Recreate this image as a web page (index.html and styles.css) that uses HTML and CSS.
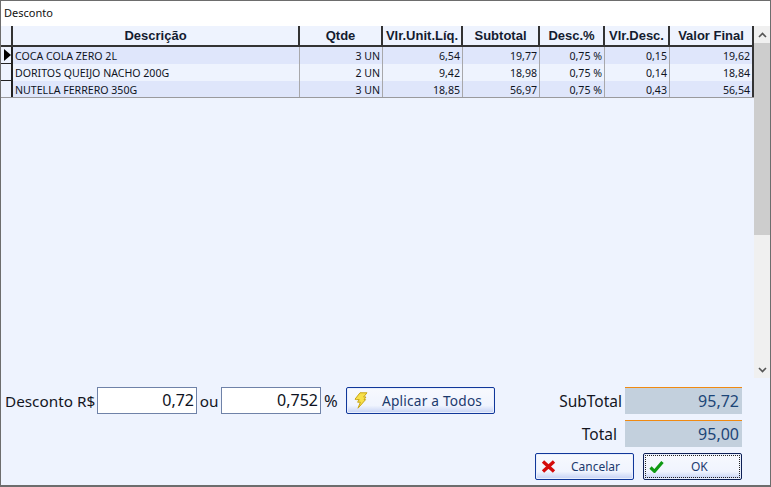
FILE: index.html
```html
<!DOCTYPE html>
<html lang="pt-BR">
<head>
<meta charset="utf-8">
<title>Desconto</title>
<link rel="stylesheet" href="styles.css">
</head>
<body>
<div class="window">
  <div class="titlebar">Desconto</div>
  <div class="content">
    <div class="grid-area">
      <div class="table-wrap">
        <div class="row head">
          <div class="c ind"></div>
          <div class="c center">Descrição</div>
          <div class="c center">Qtde</div>
          <div class="c center">Vlr.Unit.Líq.</div>
          <div class="c center">Subtotal</div>
          <div class="c center">Desc.%</div>
          <div class="c center">Vlr.Desc.</div>
          <div class="c center">Valor Final</div>
        </div>
        <div class="row data odd">
          <div class="c ind"><span class="arrow"></span></div>
          <div class="c">COCA COLA ZERO 2L</div>
          <div class="c num">3 UN</div><div class="c num">6,54</div><div class="c num">19,77</div>
          <div class="c num">0,75 %</div><div class="c num">0,15</div><div class="c num">19,62</div>
        </div>
        <div class="row data">
          <div class="c ind"></div>
          <div class="c">DORITOS QUEIJO NACHO 200G</div>
          <div class="c num">2 UN</div><div class="c num">9,42</div><div class="c num">18,98</div>
          <div class="c num">0,75 %</div><div class="c num">0,14</div><div class="c num">18,84</div>
        </div>
        <div class="row data odd last">
          <div class="c ind"></div>
          <div class="c">NUTELLA FERRERO 350G</div>
          <div class="c num">3 UN</div><div class="c num">18,85</div><div class="c num">56,97</div>
          <div class="c num">0,75 %</div><div class="c num">0,43</div><div class="c num">56,54</div>
        </div>
      </div>
      <div class="scrollbar">
        <div class="sb-btn"><svg width="9" height="6" viewBox="0 0 9 6"><path d="M1 5l3.5-3.5L8 5" fill="none" stroke="#555" stroke-width="1.6"/></svg></div>
        <div class="sb-thumb"></div>
        <div class="sb-track"></div>
        <div class="sb-btn"><svg width="9" height="6" viewBox="0 0 9 6"><path d="M1 1l3.5 3.5L8 1" fill="none" stroke="#555" stroke-width="1.6"/></svg></div>
      </div>
    </div>
    <div class="bottom">
      <div class="discount">
        <span class="label first">Desconto R$</span>
        <span class="input">0,72</span>
        <span class="label ou">ou</span>
        <span class="input">0,752</span>
        <span class="label pct">%</span>
        <button class="btn apply" type="button">
          <svg class="bolt" width="14" height="17" viewBox="0 0 14 17"><path d="M6 .8h7L9.6 5H12l-2 2.6h1.6L4 16.2l2.4-6H3.6l1.6-2.6H2.6L1 7.2z" fill="#f7e04a" stroke="#c9a514" stroke-width="1"/></svg>
          <span class="apply-text">Aplicar a Todos</span>
        </button>
      </div>
      <div class="totals">
        <div class="total-row">
          <span class="total-label">SubTotal</span>
          <span class="total-box">95,72</span>
        </div>
        <div class="total-row">
          <span class="total-label tot">Total</span>
          <span class="total-box">95,00</span>
        </div>
        <div class="actions">
          <button class="btn action" type="button">
            <svg class="act-icon" width="15" height="13" viewBox="0 0 15 13"><path d="M2 1.5l11 10M13 1.5L2 11.5" stroke="#d40b0b" stroke-width="3.4" fill="none"/></svg>
            <span class="action-text cancel">Cancelar</span>
          </button>
          <button class="btn action focus" type="button">
            <svg class="act-icon" width="15" height="13" viewBox="0 0 15 13"><path d="M1.5 7.5l4 3.8L13.5 2" stroke="#0f9a12" stroke-width="3.2" fill="none"/></svg>
            <span class="action-text ok">OK</span>
          </button>
        </div>
      </div>
    </div>
  </div>
</div>
</body>
</html>
```
FILE: styles.css
```css
* { box-sizing: border-box; }
html, body { margin: 0; padding: 0; }
body { width: 771px; height: 487px; overflow: hidden; font-family: "Noto Sans", "DejaVu Sans", sans-serif; }
.window { width: 771px; height: 487px; border: solid #6d6d6d; border-width: 1px 1px 2px 1px; display: flex; flex-direction: column; background: #eef3fe; }
.titlebar { height: 25px; background: #fff; font-size: 11px; color: #111; padding: 3px 3px 0; line-height: 17px; }
.content { flex: 1; display: flex; flex-direction: column; }
.grid-area { display: flex; height: 352px; }
.table-wrap { width: 753px; }
.row { display: grid; grid-template-columns: 12px 287px 83px 80px 77px 65px 65px 84px; }
.head { height: 21px; border-bottom: 2px solid #333; font-family: "Liberation Sans", sans-serif; font-weight: 700; font-size: 13px; color: #141c30; background: #eef3fe; }
.head .c { border-right: 2px solid #333; line-height: 20px; }
.head .c:first-child { border-right: 2px solid #333; }
.c { overflow: hidden; white-space: nowrap; }
.center { text-align: center; }
.data { height: 17px; font-size: 10.6px; line-height: 18px; color: #10141f; }
.data .c { border-right: 1px solid #a8a8ab; padding: 0 2px; }
.data .ind { border-right: 2px solid #222; border-bottom: 1px solid #222; background: #eef3fe; padding: 0; position: relative; }
.data .c:last-child { border-right: 2px solid #333; }
.data.odd .c:not(.ind) { background: #dfe6fb; }
.data:not(.odd) .c:not(.ind) { background: #eef3fe; }
.data.last { height: 17px; border-bottom: 1px solid #9a9a9d; }
.data.last .ind { border-bottom: 0; }
.num { text-align: right; }
.arrow { position: absolute; left: 3px; top: 2px; border-style: solid; border-width: 6px 0 6px 7px; border-color: transparent transparent transparent #000; }
.scrollbar { width: 17px; display: flex; flex-direction: column; background: #f0f0f0; }
.sb-btn { height: 17px; display: flex; align-items: center; justify-content: center; }
.sb-thumb { height: 192px; background: #cdcdcd; }
.sb-track { flex: 1; }
.bottom { flex: 1; display: flex; justify-content: space-between; padding: 9px 28px 0 4px; }
.discount { display: flex; height: 27px; align-items: stretch; }
.label { font-size: 15.3px; color: #14161f; line-height: 29px; }
.first { width: 92px; }
.ou { width: 24px; text-align: center; }
.pct { width: 25px; padding-left: 3px; font-size: 16.5px; line-height: 27px; }
.input { width: 100px; background: #fff; border: 1px solid #6f82a8; font-size: 16px; line-height: 24px; text-align: right; padding-right: 2px; color: #0d1222; }
.btn { font-family: inherit; padding: 0; margin: 0; border: 1px solid #10379a; border-radius: 2px; background: linear-gradient(#f7f9fe 0, #f0f4fe 70%, #c4d1f4 100%); color: #1c3a6e; display: flex; align-items: center; box-shadow: inset 0 0 0 1px #e9effc; }
.apply { width: 149px; height: 27px; font-size: 13.7px; padding-left: 7px; }
.apply-text { margin-left: 14px; letter-spacing: .2px; }
.totals { width: 207px; display: flex; flex-direction: column; }
.total-row { display: flex; justify-content: flex-end; align-items: center; height: 27px; margin-bottom: 6px; }
.total-label { font-size: 15.5px; color: #14161f; margin-right: 3px; }
.total-label.tot { margin-right: 8px; }
.total-box { width: 117px; height: 27px; background: #c3d0dd; border-top: 1px solid #f08a12; color: #1c4577; font-size: 16px; line-height: 26px; text-align: right; padding-right: 3px; }
.actions { display: flex; justify-content: space-between; }
.action { width: 99px; height: 27px; font-size: 12px; padding-left: 5px; }
.act-icon { flex: none; }
.action-text { display: block; text-align: center; }
.cancel { margin-left: 15px; }
.ok { margin-left: 27px; }
.focus { border: 1px solid #0d1f55; outline: 1px dotted #222; outline-offset: -3px; }
```
